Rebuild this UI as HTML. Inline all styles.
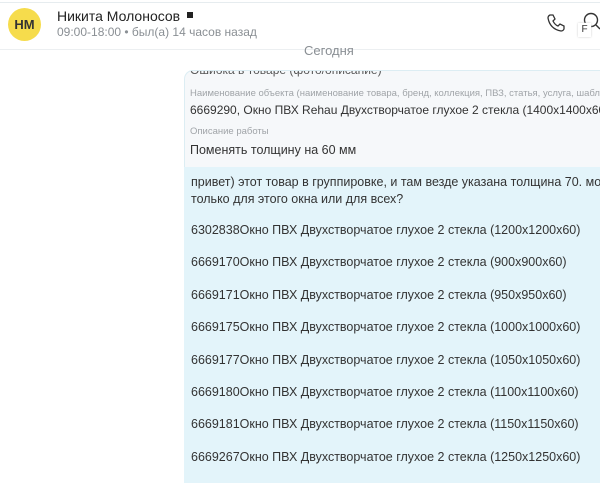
<!DOCTYPE html>
<html><head><meta charset="utf-8"><style>
html,body{overflow:hidden}
body{margin:0;width:600px;height:483px;overflow:hidden;background:#fff;font-family:"Liberation Sans",sans-serif;position:relative;color:#2b2b2b}
.a{position:absolute;white-space:nowrap}
</style></head><body>
<div class="a" style="left:0;top:2px;width:600px;height:1px;background:#e6ecef"></div>
<div class="a" style="left:0;top:49px;width:600px;height:1px;background:#eceff1"></div>
<div class="a" style="left:8px;top:8px;width:33px;height:33px;border-radius:50%;background:#f6dc4c;font-size:13px;font-weight:bold;line-height:33px;text-align:center;color:#333">НМ</div>
<div class="a" style="left:57px;top:8px;font-size:14px;color:#222">Никита Молоносов <span style="display:inline-block;width:6px;height:6px;background:#222;vertical-align:3px;margin-left:3px"></span></div>
<div class="a" style="left:57px;top:25px;font-size:12px;color:#8a8f94">09:00-18:00 • был(а) 14 часов назад</div>
<svg class="a" style="left:546px;top:13px" width="20" height="20" viewBox="0 0 20 20"><path d="M4 2 L7 2 L9 6 L7 8 Q9 12 12 13 L14 11 L18 13 L18 16 Q17 18 15 18 Q4 16 2 5 Q2 3 4 2Z" fill="none" stroke="#333" stroke-width="1.3"/></svg>
<svg class="a" style="left:581px;top:12px" width="19" height="22" viewBox="0 0 19 22"><circle cx="10" cy="8" r="6.5" fill="none" stroke="#333" stroke-width="1.4"/><path d="M15 13 L19 17" stroke="#333" stroke-width="1.4"/></svg>
<div class="a" style="left:578px;top:23px;width:13px;height:14px;background:#fff;font-size:10px;text-align:center;line-height:14px;color:#333;box-shadow:0 0 2px #ccc">F</div>
<div class="a" style="left:304px;top:43px;font-size:13px;color:#8a8f94">Сегодня</div>
<div class="a" style="left:184px;top:70px;width:415px;height:96px;background:#f6f8fa;border:1px solid #dcedf3;border-right:none;border-radius:9px 0 0 0;overflow:hidden">
<div class="a" style="left:5px;top:-8px;font-size:12px;color:#555">Ошибка в товаре (фото/описание)</div>
<div class="a" style="left:5px;top:17px;font-size:9.5px;color:#a0a4a8">Наименование объекта (наименование товара, бренд, коллекция, ПВЗ, статья, услуга, шаблон)</div>
<div class="a" style="left:5px;top:32px;font-size:12px;color:#333">6669290, Окно ПВХ Rehau Двухстворчатое глухое 2 стекла (1400x1400x60)</div>
<div class="a" style="left:5px;top:55px;font-size:9.5px;color:#a0a4a8">Описание работы</div>
<div class="a" style="left:5px;top:72px;font-size:12.5px;color:#333">Поменять толщину на 60 мм</div>
</div>
<div class="a" style="left:184px;top:167px;width:416px;height:316px;background:#e3f4fa;overflow:hidden">
<div class="a" style="left:7px;top:7px;font-size:12.5px;line-height:17px;color:#333">привет) этот товар в группировке, и там везде указана толщина 70. может<br>только для этого окна или для всех?</div>
<div class="a" style="left:7px;top:47px;font-size:12.5px;line-height:32.4px;color:#333">6302838Окно ПВХ Двухстворчатое глухое 2 стекла (1200x1200x60)<br>6669170Окно ПВХ Двухстворчатое глухое 2 стекла (900x900x60)<br>6669171Окно ПВХ Двухстворчатое глухое 2 стекла (950x950x60)<br>6669175Окно ПВХ Двухстворчатое глухое 2 стекла (1000x1000x60)<br>6669177Окно ПВХ Двухстворчатое глухое 2 стекла (1050x1050x60)<br>6669180Окно ПВХ Двухстворчатое глухое 2 стекла (1100x1100x60)<br>6669181Окно ПВХ Двухстворчатое глухое 2 стекла (1150x1150x60)<br>6669267Окно ПВХ Двухстворчатое глухое 2 стекла (1250x1250x60)</div>
</div>
</body></html>
